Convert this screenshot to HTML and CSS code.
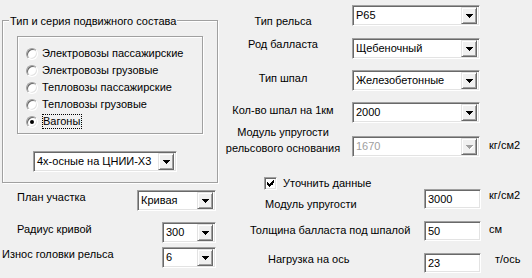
FILE: index.html
```html
<!DOCTYPE html>
<html lang="ru">
<head>
    <meta charset="UTF-8">
    <meta name="viewport" content="width=device-width, initial-scale=1.0">
    <title>Параметры пути и подвижного состава</title>
    <link rel="stylesheet" href="styles.css">
</head>
<body>
    <div class="dialog">
        <div class="left-col">
            <fieldset class="group">
                <legend>Тип и серия подвижного состава</legend>
                <div class="inner-group">
                    <div class="radio"><span class="radio-box"></span>Электровозы пассажирские</div>
                    <div class="radio"><span class="radio-box"></span>Электровозы грузовые</div>
                    <div class="radio"><span class="radio-box"></span>Тепловозы пассажирские</div>
                    <div class="radio"><span class="radio-box"></span>Тепловозы грузовые</div>
                    <div class="radio"><span class="radio-box checked"></span><span class="focus">Вагоны</span></div>
                </div>
                <div class="combo combo-series">
                    <span class="combo-text">4х-осные на ЦНИИ-Х3</span>
                    <span class="combo-btn"><svg width="7" height="4" viewBox="0 0 7 4" shape-rendering="crispEdges"><path d="M0 0h7v1H0zM1 1h5v1H1zM2 2h3v1H2zM3 3h1v1H3z"/></svg></span>
                </div>
            </fieldset>

            <div class="l-row row-plan">
                <span class="lbl">План участка</span>
                <div class="combo combo-plan">
                    <span class="combo-text">Кривая</span>
                    <span class="combo-btn"><svg width="7" height="4" viewBox="0 0 7 4" shape-rendering="crispEdges"><path d="M0 0h7v1H0zM1 1h5v1H1zM2 2h3v1H2zM3 3h1v1H3z"/></svg></span>
                </div>
            </div>
            <div class="l-row row-radius">
                <span class="lbl">Радиус кривой</span>
                <div class="combo combo-small">
                    <span class="combo-text">300</span>
                    <span class="combo-btn"><svg width="7" height="4" viewBox="0 0 7 4" shape-rendering="crispEdges"><path d="M0 0h7v1H0zM1 1h5v1H1zM2 2h3v1H2zM3 3h1v1H3z"/></svg></span>
                </div>
            </div>
            <div class="l-row row-wear">
                <span class="lbl">Износ головки рельса</span>
                <div class="combo combo-small">
                    <span class="combo-text">6</span>
                    <span class="combo-btn"><svg width="7" height="4" viewBox="0 0 7 4" shape-rendering="crispEdges"><path d="M0 0h7v1H0zM1 1h5v1H1zM2 2h3v1H2zM3 3h1v1H3z"/></svg></span>
                </div>
            </div>
        </div>

        <div class="right-col">
            <div class="r-row row-rail">
                <span class="r-label">Тип рельса</span>
                <div class="combo">
                    <span class="combo-text">Р65</span>
                    <span class="combo-btn"><svg width="7" height="4" viewBox="0 0 7 4" shape-rendering="crispEdges"><path d="M0 0h7v1H0zM1 1h5v1H1zM2 2h3v1H2zM3 3h1v1H3z"/></svg></span>
                </div>
            </div>
            <div class="r-row row-ballast">
                <span class="r-label">Род балласта</span>
                <div class="combo">
                    <span class="combo-text">Щебеночный</span>
                    <span class="combo-btn"><svg width="7" height="4" viewBox="0 0 7 4" shape-rendering="crispEdges"><path d="M0 0h7v1H0zM1 1h5v1H1zM2 2h3v1H2zM3 3h1v1H3z"/></svg></span>
                </div>
            </div>
            <div class="r-row row-sleeper">
                <span class="r-label">Тип шпал</span>
                <div class="combo">
                    <span class="combo-text">Железобетонные</span>
                    <span class="combo-btn"><svg width="7" height="4" viewBox="0 0 7 4" shape-rendering="crispEdges"><path d="M0 0h7v1H0zM1 1h5v1H1zM2 2h3v1H2zM3 3h1v1H3z"/></svg></span>
                </div>
            </div>
            <div class="r-row row-count">
                <span class="r-label">Кол-во шпал на 1км</span>
                <div class="combo">
                    <span class="combo-text">2000</span>
                    <span class="combo-btn"><svg width="7" height="4" viewBox="0 0 7 4" shape-rendering="crispEdges"><path d="M0 0h7v1H0zM1 1h5v1H1zM2 2h3v1H2zM3 3h1v1H3z"/></svg></span>
                </div>
            </div>
            <div class="r-row row-modulus">
                <span class="r-label">Модуль упругости<br>рельсового основания</span>
                <div class="combo disabled">
                    <span class="combo-text">1670</span>
                    <span class="combo-btn"><svg width="8" height="5" viewBox="0 0 8 5" shape-rendering="crispEdges"><path class="shade" d="M1 1h7v1H1zM2 2h5v1H2zM3 3h3v1H3zM4 4h1v1H4z"/><path d="M0 0h7v1H0zM1 1h5v1H1zM2 2h3v1H2zM3 3h1v1H3z"/></svg></span>
                </div>
                <span class="unit">кг/см2</span>
            </div>

            <div class="check-row">
                <span class="check-box"><svg width="7" height="7" viewBox="0 0 7 7" shape-rendering="crispEdges"><path d="M6 0h1v3H6zM5 1h1v4H5zM4 2h1v3H4zM3 3h1v3H3zM2 4h1v3H2zM1 3h1v3H1zM0 2h1v3H0z"/></svg></span>
                <span>Уточнить данные</span>
            </div>

            <div class="f-row row-elastic">
                <span class="f-label">Модуль упругости</span>
                <input class="field" type="text" value="3000">
                <span class="unit">кг/см2</span>
            </div>
            <div class="f-row row-thickness">
                <span class="f-label">Толщина балласта под шпалой</span>
                <input class="field" type="text" value="50">
                <span class="unit">см</span>
            </div>
            <div class="f-row row-load">
                <span class="f-label">Нагрузка на ось</span>
                <input class="field" type="text" value="23">
                <span class="unit">т/ось</span>
            </div>
        </div>
    </div>
</body>
</html>
```

FILE: styles.css
```css
body {
    margin: 0;
    background: #f0f0f0;
    font-family: "Liberation Sans", Arial, sans-serif;
    font-size: 11px;
    line-height: 13px;
    color: #000;
}

.dialog {
    display: flex;
    padding-left: 2px;
}

.left-col {
    width: 216px;
    padding-top: 13px;
}

.right-col {
    width: 314px;
}

/* group boxes, etched like the old windows ones */
.group {
    margin: 0;
    padding: 0;
    min-width: 0;
    border: 1px solid #a0a0a0;
    box-shadow: inset 1px 1px #fff, 1px 1px #fff;
}

.group legend {
    margin-left: 6px;
    padding: 2px 1px 0;
    background: #f0f0f0;
}

.inner-group {
    width: 186px;
    height: 98px;
    box-sizing: border-box;
    margin: 8px 0 0 14px;
    padding: 8px 0 0 8px;
    border: 1px solid #a0a0a0;
    box-shadow: inset 1px 1px #fff, 1px 1px #fff;
}

.radio {
    display: flex;
    align-items: center;
    height: 17px;
    white-space: nowrap;
}

.radio-box {
    display: flex;
    align-items: center;
    justify-content: center;
    width: 12px;
    height: 12px;
    box-sizing: border-box;
    margin-right: 4px;
    border-radius: 50%;
    border: 1px solid;
    border-color: #a0a0a0 #fff #fff #a0a0a0;
    background: #fff;
    box-shadow: inset 1px 1px #696969, inset -1px -1px #e3e3e3;
}

.radio-box.checked::after {
    content: "";
    width: 4px;
    height: 4px;
    border-radius: 50%;
    background: #000;
}

.focus {
    border: 1px dotted #000;
    padding-right: 1px;
}

/* combo boxes */
.combo {
    display: flex;
    align-items: center;
    height: 21px;
    box-sizing: border-box;
    padding: 2px;
    border: 1px solid;
    border-color: #a0a0a0 #fff #fff #a0a0a0;
    box-shadow: inset 1px 1px #696969, inset -1px -1px #e3e3e3;
    background: #fff;
}

.combo-text {
    flex: 1;
    padding-left: 1px;
    white-space: nowrap;
    overflow: hidden;
}

.combo-btn {
    display: flex;
    align-items: center;
    justify-content: center;
    width: 16px;
    height: 17px;
    box-sizing: border-box;
    border: 1px solid;
    border-color: #e3e3e3 #696969 #696969 #e3e3e3;
    box-shadow: inset 1px 1px #fff, inset -1px -1px #a0a0a0;
    background: #f0f0f0;
}

.combo.disabled .combo-text {
    color: #a0a0a0;
}

.combo.disabled .combo-btn svg {
    fill: #a0a0a0;
    margin: 1px 0 0 1px;
}

.combo.disabled .combo-btn .shade {
    fill: #fff;
}

.combo-series {
    width: 144px;
    margin: 17px 0 10px 30px;
}

/* left rows under the group */
.l-row {
    display: flex;
    align-items: flex-start;
}

.l-row .lbl {
    margin-top: 1px;
    white-space: nowrap;
}

.l-row .combo {
    margin-left: auto;
    margin-right: 2px;
}

.row-plan {
    margin-top: 7px;
    padding-left: 15px;
}

.row-radius {
    margin-top: 11px;
    padding-left: 15px;
}

.row-wear {
    margin-top: 4px;
}

.combo-plan {
    width: 79px;
}

.combo-small {
    width: 54px;
}

/* right side */
.r-row {
    display: flex;
    align-items: flex-start;
}

.r-label {
    width: 130px;
    text-align: center;
    white-space: nowrap;
}

.r-row .combo {
    width: 128px;
    margin-left: 4px;
}

.unit {
    margin-left: 9px;
}

.row-rail {
    margin-top: 5px;
}

.row-rail .r-label {
    margin-top: 10px;
}

.row-ballast {
    margin-top: 10px;
}

.row-sleeper {
    margin-top: 11px;
}

.row-sleeper .r-label,
.row-count .r-label {
    margin-top: 2px;
}

.row-count {
    margin-top: 11px;
}

.row-modulus {
    margin-top: 1px;
}

.row-modulus .r-label {
    line-height: 16px;
}

.row-modulus .combo {
    margin-top: 12px;
}

.row-modulus .unit {
    margin-top: 15px;
}

.check-row {
    display: flex;
    align-items: center;
    margin: 20px 0 0 46px;
}

.check-box {
    display: flex;
    align-items: center;
    justify-content: center;
    width: 13px;
    height: 13px;
    box-sizing: border-box;
    margin-right: 6px;
    border: 1px solid;
    border-color: #a0a0a0 #fff #fff #a0a0a0;
    box-shadow: inset 1px 1px #696969, inset -1px -1px #e3e3e3;
    background: #fff;
}

.f-row {
    display: flex;
    align-items: flex-start;
}

.f-label {
    width: 206px;
    box-sizing: border-box;
    white-space: nowrap;
}

.field {
    width: 57px;
    height: 20px;
    box-sizing: border-box;
    margin: 0;
    padding: 0 0 0 3px;
    border: 1px solid;
    border-color: #a0a0a0 #fff #fff #a0a0a0;
    box-shadow: inset 1px 1px #696969, inset -1px -1px #e3e3e3;
    background: #fff;
    font: inherit;
    color: #000;
    outline: none;
}

.f-row .unit {
    margin-left: 8px;
}

.row-elastic {
    margin-top: -1px;
}

.row-elastic .f-label {
    padding-left: 47px;
    margin-top: 9px;
}

.row-thickness {
    margin-top: 10px;
}

.row-thickness .f-label {
    padding-left: 32px;
    margin-top: 3px;
}

.row-thickness .unit {
    margin-top: 2px;
}

.row-load {
    margin-top: 12px;
}

.row-load .f-label {
    padding-left: 50px;
}

.row-load .unit {
    margin-left: 14px;
}
```
